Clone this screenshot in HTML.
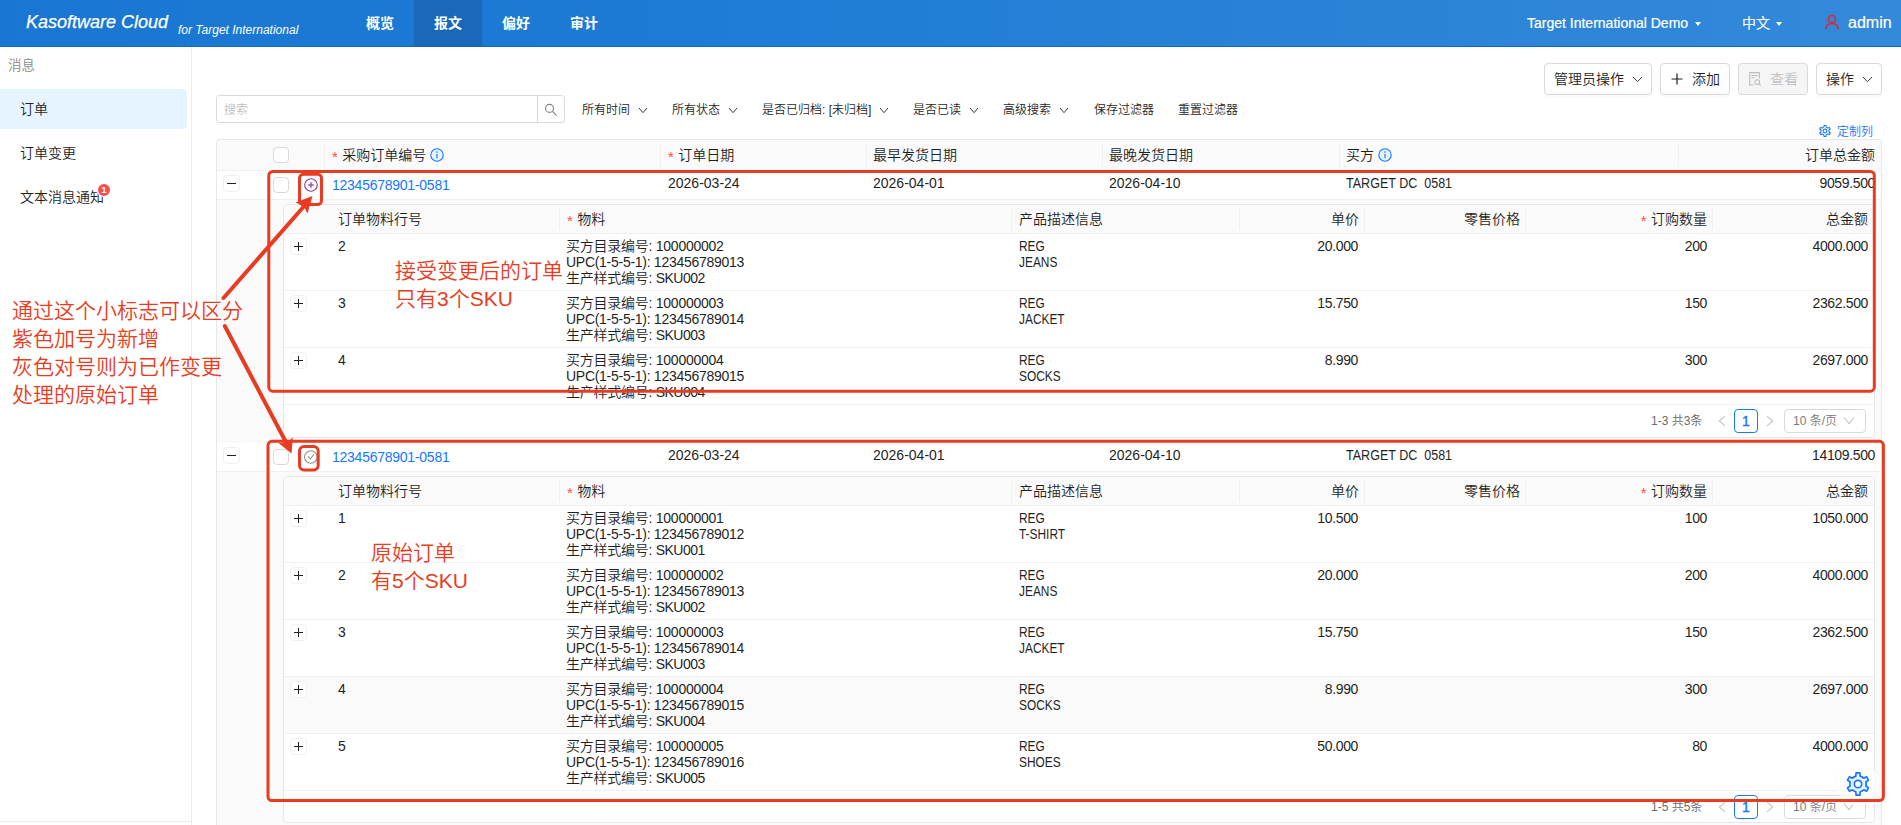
<!DOCTYPE html>
<html lang="zh-CN"><head><meta charset="utf-8"><title>订单 - Kasoftware Cloud</title>
<style>
*{box-sizing:border-box;margin:0;padding:0}
html,body{width:1901px;height:825px;overflow:hidden;background:#fff}
body{position:relative;font-family:"Liberation Sans","Noto Sans CJK SC",sans-serif;font-size:14px;color:#1f1f1f;line-height:16px;font-weight:350}
.abs{position:absolute;white-space:nowrap}
#hdr{position:absolute;left:0;top:0;width:1901px;height:47px;background:linear-gradient(90deg,#1976d2 0%,#1e7bd4 35%,#3489da 100%);border-bottom:1px solid #0f6bcb;color:#fff}
#hdr .brand{left:26px;top:10px;font-size:18px;line-height:24px;font-style:italic;-webkit-text-stroke:.25px #fff}
#hdr .sub{left:178px;top:22px;font-size:12px;line-height:16px;font-style:italic}
#hdr .tab{top:0;height:46px;width:68px;text-align:center;line-height:46px;font-weight:bold;font-size:14px}
#hdr .tab.on{background:#1a69b8;height:47px;border-bottom:1px solid #1360b0}
#hdr .r{top:0;line-height:46px;font-size:14px;-webkit-text-stroke:.2px #fff}
.caret{display:inline-block;width:0;height:0;border-left:3.5px solid transparent;border-right:3.5px solid transparent;border-top:4px solid #fff;vertical-align:middle;margin-left:7px;margin-top:-1px}
#side{position:absolute;left:0;top:47px;width:192px;height:778px;border-right:1px solid #ececec;background:#fff}
#side .grp{left:8px;top:11px;font-size:13.5px;line-height:16px;color:#8c8c8c}
#side .it{left:0;width:187px;height:40px;line-height:40px;padding-left:20px;font-size:14px;border-radius:0 4px 4px 0}
#side .it.on{background:#e6f4ff}
#side .foot{left:0;top:774px;width:191px;height:4px;border-top:1px solid #ececec}
.badge{position:absolute;left:98px;top:7px;width:12px;height:12px;border-radius:6px;background:#ff4d4f;color:#fff;font-size:9px;line-height:12px;text-align:center;font-weight:bold;box-shadow:0 0 0 1px #fff}
.btn{font:inherit;color:inherit;text-align:left;padding:0;position:absolute;top:63px;height:32px;border:1px solid #d9d9d9;border-radius:4px;background:#fff;box-shadow:0 2px 0 rgba(0,0,0,.02);font-size:14px;line-height:30px;white-space:nowrap}
.btn.dis{background:#f5f5f5;color:#bfbfbf;box-shadow:none}
.flt{position:absolute;top:102px;font-size:12px;line-height:16px;white-space:nowrap}
.chev{position:absolute}
#search{position:absolute;left:216px;top:95px;width:349px;height:28px;border:1px solid #d9d9d9;border-radius:3.500px;box-shadow:0 2px 0 rgba(0,0,0,.015);background:#fff}
#search .ph{left:7px;top:6px;font-size:12px;color:#bfbfbf}
#search .sb{position:absolute;right:0;top:0;width:27px;height:26px;border-left:1px solid #d9d9d9}
.cust{position:absolute;left:1837px;top:124px;font-size:12px;color:#1677ff;line-height:16px}
/* tables */
#tbl{position:absolute;left:216px;top:139px;width:1666px;height:686px;border:1px solid #e4e7ed;border-bottom:0;border-radius:4px 4px 0 0;background:#fafafa}
.th{position:absolute;background:#fafafa;border-bottom:1px solid #f0f0f0}
.row{position:absolute;background:#fff;border-bottom:1px solid #f0f0f0}
.sep{position:absolute;width:1px;background:#f0f0f0}
.t{position:absolute;white-space:nowrap;font-size:14px;line-height:16px}
.rt{text-align:right}
.n{letter-spacing:-.25px}
.n2{letter-spacing:-.36px}
.cap{display:inline-block;transform:scaleX(.85);transform-origin:0 50%}
.cap2{display:inline-block;transform:scaleX(.895);transform-origin:0 50%}
.star{color:#ff4d4f;font-family:"Liberation Sans",sans-serif;font-size:15px;line-height:14px;position:relative;top:1.500px;margin-right:.6px}
.cb{position:absolute;width:16px;height:16px;border:1px solid #d9d9d9;border-radius:4px;background:#fff}
.exp{position:absolute;width:17px;height:17px;border:1px solid #f0f0f0;border-radius:4px;background:#fff}
.exp:before{content:"";position:absolute;left:3px;right:3px;top:7px;height:1px;background:#1f1f1f}
.exp.plus:after{content:"";position:absolute;top:3px;bottom:3px;left:7px;width:1px;background:#1f1f1f}
a.lk{color:#1677ff;text-decoration:none}
.nest{position:absolute;left:66px;width:1592px;border:1px solid #e4e7ed;border-radius:4px;background:#fff;overflow:hidden}
.pg{position:absolute;font-size:12px;line-height:16px;white-space:nowrap}
.pgbox{position:absolute;width:24px;height:24px;border:1px solid #1677ff;border-radius:4px;color:#1677ff;-webkit-text-stroke:.4px #1677ff;text-align:center;line-height:22px;font-size:14px;background:#fff}
.pgsel{position:absolute;width:82px;height:24px;border:1px solid #d9d9d9;border-radius:4px;background:#fff;color:#7a7a7a;font-size:12px;line-height:22px;padding-left:8px}
#fab{position:absolute;left:1836px;top:762px;width:44px;height:44px;border-radius:22px;background:rgba(255,255,255,.66);box-shadow:0 0 2px rgba(0,0,0,.05)}
#anno{position:absolute;left:0;top:0;width:1901px;height:825px;pointer-events:none}
#anno text{font-family:"Liberation Sans","Noto Sans CJK SC",sans-serif;font-size:21px;font-weight:350;fill:#e83c22}
</style></head>
<body>
<header id="hdr">
<div class="abs brand">Kasoftware Cloud</div><div class="abs sub">for Target International</div>
<div class="abs tab" style="left:346px">概览</div><div class="abs tab on" style="left:414px">报文</div><div class="abs tab" style="left:482px">偏好</div><div class="abs tab" style="left:550px">审计</div>
<div class="abs r" style="left:1527px">Target International Demo<span class="caret"></span></div><div class="abs r" style="left:1742px">中文<span class="caret" style="margin-left:6px"></span></div><svg class="chev" style="left:1824px;top:14px" width="16" height="16" viewBox="0 0 16 16" fill="none" stroke="#e0262e" stroke-width="1.5"><circle cx="8" cy="5" r="3.6"/><path d="M1.6 15.2c.5-3.6 3-5.6 6.4-5.6s5.900 2 6.400 5.600"/></svg><div class="abs r" style="left:1848px;font-size:16px;line-height:46px">admin</div>
</header>
<aside id="side"><div class="abs grp">消息</div><div class="abs it on" style="top:42px">订单</div><div class="abs it" style="top:86px">订单变更</div><div class="abs it" style="top:130px">文本消息通知<span class="badge">1</span></div><div class="abs foot"></div></aside>
<button class="btn" style="left:1544px;width:108px;padding-left:9px">管理员操作</button><svg class="chev" style="left:1632px;top:76px" width="11" height="7" viewBox="0 0 11 7"><path d="M1 1 L5.5 5.7 L10 1" fill="none" stroke="#3a3a3a" stroke-width="1.0"/></svg><button class="btn" style="left:1660px;width:70px;padding-left:31px">添加</button><svg class="chev" style="left:1671px;top:73px" width="12" height="12" viewBox="0 0 12 12"><path d="M6 .5v11M.5 6h11" stroke="#1f1f1f" stroke-width="1.2"/></svg><button class="btn dis" disabled style="left:1738px;width:70px;padding-left:31px">查看</button><svg class="chev" style="left:1748px;top:71px" width="14" height="16" viewBox="0 0 14 16" fill="none" stroke="#bdbdbd" stroke-width="1.1"><path d="M5.600 14H1.700V1.600h9.700V7.400M3.400 4.500h6.300M3.400 6.700h3.100"/><circle cx="9.200" cy="11.100" r="2.400"/><path d="M11 12.900l1.800 1.700"/></svg><button class="btn" style="left:1816px;width:66px;padding-left:9px">操作</button><svg class="chev" style="left:1862px;top:76px" width="11" height="7" viewBox="0 0 11 7"><path d="M1 1 L5.5 5.7 L10 1" fill="none" stroke="#3a3a3a" stroke-width="1.0"/></svg>
<div id="search"><div class="abs ph">搜索</div><div class="sb"><svg class="chev" style="left:6px;top:6px" width="14" height="15" viewBox="0 0 14 15" fill="none" stroke="#7f7f7f" stroke-width="1.1"><circle cx="5.500" cy="6.400" r="4"/><path d="M8.400 9.300l4.300 4.300"/></svg></div></div>
<div class="flt" style="left:582px">所有时间</div><svg class="chev" style="left:638px;top:106.5px" width="10" height="7" viewBox="0 0 10 7"><path d="M1 1 L5.0 5.7 L9 1" fill="none" stroke="#3a3a3a" stroke-width="1"/></svg><div class="flt" style="left:672px">所有状态</div><svg class="chev" style="left:728px;top:106.5px" width="10" height="7" viewBox="0 0 10 7"><path d="M1 1 L5.0 5.7 L9 1" fill="none" stroke="#3a3a3a" stroke-width="1"/></svg><div class="flt" style="left:762px">是否已归档: [未归档]</div><svg class="chev" style="left:879px;top:106.5px" width="10" height="7" viewBox="0 0 10 7"><path d="M1 1 L5.0 5.7 L9 1" fill="none" stroke="#3a3a3a" stroke-width="1"/></svg><div class="flt" style="left:913px">是否已读</div><svg class="chev" style="left:969px;top:106.5px" width="10" height="7" viewBox="0 0 10 7"><path d="M1 1 L5.0 5.7 L9 1" fill="none" stroke="#3a3a3a" stroke-width="1"/></svg><div class="flt" style="left:1003px">高级搜索</div><svg class="chev" style="left:1059px;top:106.5px" width="10" height="7" viewBox="0 0 10 7"><path d="M1 1 L5.0 5.7 L9 1" fill="none" stroke="#3a3a3a" stroke-width="1"/></svg><div class="flt" style="left:1094px">保存过滤器</div><div class="flt" style="left:1178px">重置过滤器</div>
<svg class="chev" style="left:1819px;top:125px" width="12" height="12" viewBox="0 0 24 24" fill="none" stroke="#1677ff" stroke-width="2.2" stroke-linejoin="round"><path d="M9.8 4.1L10.1 0.9L13.9 0.9L14.2 4.1A8.2 8.2 0 0 1 17.7 6.1L20.7 4.8L22.5 8.1L19.9 10.0A8.2 8.2 0 0 1 19.9 14.0L22.5 15.9L20.7 19.2L17.7 17.9A8.2 8.2 0 0 1 14.2 19.9L13.9 23.1L10.1 23.1L9.8 19.9A8.2 8.2 0 0 1 6.3 17.9L3.3 19.2L1.5 15.9L4.1 14.0A8.2 8.2 0 0 1 4.1 10.0L1.5 8.1L3.3 4.8L6.3 6.1A8.2 8.2 0 0 1 9.8 4.1Z"/><circle cx="12" cy="12" r="3.700" fill="#fff"/></svg><div class="cust">定制列</div>
<div id="tbl">
<div class="th" style="left:0;top:0;width:1664px;height:31px;border-radius:4px 4px 0 0"></div><div class="sep" style="left:107px;top:4px;height:22px"></div><div class="sep" style="left:443px;top:4px;height:22px"></div><div class="sep" style="left:649px;top:4px;height:22px"></div><div class="sep" style="left:885px;top:4px;height:22px"></div><div class="sep" style="left:1122px;top:4px;height:22px"></div><div class="sep" style="left:1461px;top:4px;height:22px"></div><div class="cb" style="left:56px;top:7px"></div><div class="t" style="left:115px;top:7px"><span class="star">*</span> 采购订单编号</div><svg class="chev" style="left:213px;top:8px" width="14" height="14" viewBox="0 0 14 14"><circle cx="7" cy="7" r="6.2" fill="#e6f4ff" stroke="#1677ff" stroke-width="1.1"/><rect x="6.4" y="6" width="1.2" height="4.2" fill="#1677ff"/><circle cx="7" cy="4.1" r=".8" fill="#1677ff"/></svg><div class="t" style="left:451px;top:7px"><span class="star">*</span> 订单日期</div><div class="t" style="left:656px;top:7px">最早发货日期</div><div class="t" style="left:892px;top:7px">最晚发货日期</div><div class="t" style="left:1129px;top:7px">买方</div><svg class="chev" style="left:1161px;top:8px" width="14" height="14" viewBox="0 0 14 14"><circle cx="7" cy="7" r="6.2" fill="#e6f4ff" stroke="#1677ff" stroke-width="1.1"/><rect x="6.4" y="6" width="1.2" height="4.2" fill="#1677ff"/><circle cx="7" cy="4.1" r=".8" fill="#1677ff"/></svg><div class="t rt" style="left:1483px;width:175px;top:7px">订单总金额</div>
<div class="row" style="left:0;top:31px;width:1664px;height:29px"></div><div class="exp" style="left:6px;top:35px"></div><div class="cb" style="left:56px;top:37px"></div><svg class="chev" style="left:87px;top:38px" width="14" height="14" viewBox="0 0 14 14" fill="none" stroke="#8e3a84" stroke-width="1.1"><circle cx="7" cy="7" r="6.300"/><path d="M7 4.200v5.600M4.200 7h5.600" stroke-width="1.500" stroke="#a0559a"/></svg><div class="t" style="left:115px;top:37px"><a class="lk n">12345678901-0581</a></div><div class="t" style="left:451px;top:35px">2026-03-24</div><div class="t" style="left:656px;top:35px">2026-04-01</div><div class="t" style="left:892px;top:35px">2026-04-10</div><div class="t" style="left:1129px;top:35px"><span class="cap2">TARGET DC&nbsp; 0581</span></div><div class="t rt n2" style="left:1483px;width:175px;top:35px">9059.500</div>
<div class="nest" style="top:64px;height:234px">
<div class="th" style="left:0;top:0;width:1590px;height:29px"></div><div class="sep" style="left:275px;top:3px;height:22px"></div><div class="sep" style="left:727px;top:3px;height:22px"></div><div class="sep" style="left:955px;top:3px;height:22px"></div><div class="sep" style="left:1080px;top:3px;height:22px"></div><div class="sep" style="left:1241px;top:3px;height:22px"></div><div class="sep" style="left:1428px;top:3px;height:22px"></div><div class="t" style="left:54px;top:6px">订单物料行号</div><div class="t" style="left:283px;top:6px"><span class="star">*</span> 物料</div><div class="t" style="left:735px;top:6px">产品描述信息</div><div class="t rt" style="left:975px;width:100px;top:6px">单价</div><div class="t rt" style="left:1136px;width:100px;top:6px">零售价格</div><div class="t rt" style="left:1273px;width:150px;top:6px"><span class="star">*</span> 订购数量</div><div class="t rt" style="left:1484px;width:100px;top:6px">总金额</div>
<div class="row" style="left:0;top:29px;width:1590px;height:57px"></div><div class="exp plus" style="left:6px;top:33px"></div><div class="t" style="left:54px;top:33px">2</div><div class="t" style="left:282px;top:33px"><span class="n">买方目录编号: 100000002</span><br><span class="n" style="letter-spacing:-.28px">UPC(1-5-5-1): 123456789013</span><br><span class="n">生产样式编号: <span style="letter-spacing:-.55px">SKU002</span></span></div><div class="t" style="left:735px;top:33px"><span class="cap">REG</span><br><span class="cap">JEANS</span></div><div class="t rt n2" style="left:974px;width:100px;top:33px">20.000</div><div class="t rt n2" style="left:1273px;width:150px;top:33px">200</div><div class="t rt n2" style="left:1484px;width:100px;top:33px">4000.000</div>
<div class="row" style="left:0;top:86px;width:1590px;height:57px"></div><div class="exp plus" style="left:6px;top:90px"></div><div class="t" style="left:54px;top:90px">3</div><div class="t" style="left:282px;top:90px"><span class="n">买方目录编号: 100000003</span><br><span class="n" style="letter-spacing:-.28px">UPC(1-5-5-1): 123456789014</span><br><span class="n">生产样式编号: <span style="letter-spacing:-.55px">SKU003</span></span></div><div class="t" style="left:735px;top:90px"><span class="cap">REG</span><br><span class="cap">JACKET</span></div><div class="t rt n2" style="left:974px;width:100px;top:90px">15.750</div><div class="t rt n2" style="left:1273px;width:150px;top:90px">150</div><div class="t rt n2" style="left:1484px;width:100px;top:90px">2362.500</div>
<div class="row" style="left:0;top:143px;width:1590px;height:57px"></div><div class="exp plus" style="left:6px;top:147px"></div><div class="t" style="left:54px;top:147px">4</div><div class="t" style="left:282px;top:147px"><span class="n">买方目录编号: 100000004</span><br><span class="n" style="letter-spacing:-.28px">UPC(1-5-5-1): 123456789015</span><br><span class="n">生产样式编号: <span style="letter-spacing:-.55px">SKU004</span></span></div><div class="t" style="left:735px;top:147px"><span class="cap">REG</span><br><span class="cap">SOCKS</span></div><div class="t rt n2" style="left:974px;width:100px;top:147px">8.990</div><div class="t rt n2" style="left:1273px;width:150px;top:147px">300</div><div class="t rt n2" style="left:1484px;width:100px;top:147px">2697.000</div>
<div class="pg" style="left:1367px;top:208px;color:#6b6b6b">1-3 共3条</div><svg class="chev" style="left:1434px;top:210px" width="8" height="12" viewBox="0 0 8 12"><path d="M7 1.200 L1.300 6 L7 10.800" fill="none" stroke="#c4c4c4" stroke-width="1.1"/></svg><div class="pgbox" style="left:1450px;top:204px">1</div><svg class="chev" style="left:1482px;top:210px" width="8" height="12" viewBox="0 0 8 12"><path d="M1 1.200 L6.700 6 L1 10.800" fill="none" stroke="#c4c4c4" stroke-width="1.1"/></svg><div class="pgsel" style="left:1500px;top:204px">10 条/页</div><svg class="chev" style="left:1559px;top:211px" width="12" height="9" viewBox="0 0 12 9"><path d="M1 1.500 L6 7.600 L11 1.500" fill="none" stroke="#c4c4c4" stroke-width="1.1"/></svg>
</div>
<div class="row" style="left:0;top:303px;width:1664px;height:29px"></div><div class="exp" style="left:6px;top:307px"></div><div class="cb" style="left:56px;top:309px"></div><svg class="chev" style="left:87px;top:310px" width="14" height="14" viewBox="0 0 14 14" fill="none" stroke="#8f8f8f" stroke-width="1.050"><circle cx="6.800" cy="7" r="6.300"/><path d="M4.200 6.300l2.300 2.700 3.300-4.800"/></svg><div class="t" style="left:115px;top:309px"><a class="lk n">12345678901-0581</a></div><div class="t" style="left:451px;top:307px">2026-03-24</div><div class="t" style="left:656px;top:307px">2026-04-01</div><div class="t" style="left:892px;top:307px">2026-04-10</div><div class="t" style="left:1129px;top:307px"><span class="cap2">TARGET DC&nbsp; 0581</span></div><div class="t rt n2" style="left:1483px;width:175px;top:307px">14109.500</div>
<div class="nest" style="top:336px;height:347px">
<div class="th" style="left:0;top:0;width:1590px;height:29px"></div><div class="sep" style="left:275px;top:3px;height:22px"></div><div class="sep" style="left:727px;top:3px;height:22px"></div><div class="sep" style="left:955px;top:3px;height:22px"></div><div class="sep" style="left:1080px;top:3px;height:22px"></div><div class="sep" style="left:1241px;top:3px;height:22px"></div><div class="sep" style="left:1428px;top:3px;height:22px"></div><div class="t" style="left:54px;top:6px">订单物料行号</div><div class="t" style="left:283px;top:6px"><span class="star">*</span> 物料</div><div class="t" style="left:735px;top:6px">产品描述信息</div><div class="t rt" style="left:975px;width:100px;top:6px">单价</div><div class="t rt" style="left:1136px;width:100px;top:6px">零售价格</div><div class="t rt" style="left:1273px;width:150px;top:6px"><span class="star">*</span> 订购数量</div><div class="t rt" style="left:1484px;width:100px;top:6px">总金额</div>
<div class="row" style="left:0;top:29px;width:1590px;height:57px"></div><div class="exp plus" style="left:6px;top:33px"></div><div class="t" style="left:54px;top:33px">1</div><div class="t" style="left:282px;top:33px"><span class="n">买方目录编号: 100000001</span><br><span class="n" style="letter-spacing:-.28px">UPC(1-5-5-1): 123456789012</span><br><span class="n">生产样式编号: <span style="letter-spacing:-.55px">SKU001</span></span></div><div class="t" style="left:735px;top:33px"><span class="cap">REG</span><br><span class="cap">T-SHIRT</span></div><div class="t rt n2" style="left:974px;width:100px;top:33px">10.500</div><div class="t rt n2" style="left:1273px;width:150px;top:33px">100</div><div class="t rt n2" style="left:1484px;width:100px;top:33px">1050.000</div>
<div class="row" style="left:0;top:86px;width:1590px;height:57px"></div><div class="exp plus" style="left:6px;top:90px"></div><div class="t" style="left:54px;top:90px">2</div><div class="t" style="left:282px;top:90px"><span class="n">买方目录编号: 100000002</span><br><span class="n" style="letter-spacing:-.28px">UPC(1-5-5-1): 123456789013</span><br><span class="n">生产样式编号: <span style="letter-spacing:-.55px">SKU002</span></span></div><div class="t" style="left:735px;top:90px"><span class="cap">REG</span><br><span class="cap">JEANS</span></div><div class="t rt n2" style="left:974px;width:100px;top:90px">20.000</div><div class="t rt n2" style="left:1273px;width:150px;top:90px">200</div><div class="t rt n2" style="left:1484px;width:100px;top:90px">4000.000</div>
<div class="row" style="left:0;top:143px;width:1590px;height:57px"></div><div class="exp plus" style="left:6px;top:147px"></div><div class="t" style="left:54px;top:147px">3</div><div class="t" style="left:282px;top:147px"><span class="n">买方目录编号: 100000003</span><br><span class="n" style="letter-spacing:-.28px">UPC(1-5-5-1): 123456789014</span><br><span class="n">生产样式编号: <span style="letter-spacing:-.55px">SKU003</span></span></div><div class="t" style="left:735px;top:147px"><span class="cap">REG</span><br><span class="cap">JACKET</span></div><div class="t rt n2" style="left:974px;width:100px;top:147px">15.750</div><div class="t rt n2" style="left:1273px;width:150px;top:147px">150</div><div class="t rt n2" style="left:1484px;width:100px;top:147px">2362.500</div>
<div class="row" style="left:0;top:200px;width:1590px;height:57px;background:#fafafa"></div><div class="exp plus" style="left:6px;top:204px"></div><div class="t" style="left:54px;top:204px">4</div><div class="t" style="left:282px;top:204px"><span class="n">买方目录编号: 100000004</span><br><span class="n" style="letter-spacing:-.28px">UPC(1-5-5-1): 123456789015</span><br><span class="n">生产样式编号: <span style="letter-spacing:-.55px">SKU004</span></span></div><div class="t" style="left:735px;top:204px"><span class="cap">REG</span><br><span class="cap">SOCKS</span></div><div class="t rt n2" style="left:974px;width:100px;top:204px">8.990</div><div class="t rt n2" style="left:1273px;width:150px;top:204px">300</div><div class="t rt n2" style="left:1484px;width:100px;top:204px">2697.000</div>
<div class="row" style="left:0;top:257px;width:1590px;height:57px"></div><div class="exp plus" style="left:6px;top:261px"></div><div class="t" style="left:54px;top:261px">5</div><div class="t" style="left:282px;top:261px"><span class="n">买方目录编号: 100000005</span><br><span class="n" style="letter-spacing:-.28px">UPC(1-5-5-1): 123456789016</span><br><span class="n">生产样式编号: <span style="letter-spacing:-.55px">SKU005</span></span></div><div class="t" style="left:735px;top:261px"><span class="cap">REG</span><br><span class="cap">SHOES</span></div><div class="t rt n2" style="left:974px;width:100px;top:261px">50.000</div><div class="t rt n2" style="left:1273px;width:150px;top:261px">80</div><div class="t rt n2" style="left:1484px;width:100px;top:261px">4000.000</div>
<div class="pg" style="left:1367px;top:322px;color:#6b6b6b">1-5 共5条</div><svg class="chev" style="left:1434px;top:324px" width="8" height="12" viewBox="0 0 8 12"><path d="M7 1.200 L1.300 6 L7 10.800" fill="none" stroke="#c4c4c4" stroke-width="1.1"/></svg><div class="pgbox" style="left:1450px;top:318px">1</div><svg class="chev" style="left:1482px;top:324px" width="8" height="12" viewBox="0 0 8 12"><path d="M1 1.200 L6.700 6 L1 10.800" fill="none" stroke="#c4c4c4" stroke-width="1.1"/></svg><div class="pgsel" style="left:1500px;top:318px">10 条/页</div><svg class="chev" style="left:1559px;top:325px" width="12" height="9" viewBox="0 0 12 9"><path d="M1 1.500 L6 7.600 L11 1.500" fill="none" stroke="#c4c4c4" stroke-width="1.1"/></svg>
</div>
</div>
<div id="fab"><svg class="chev" style="left:9.8px;top:9.8px" width="24" height="24" viewBox="0 0 24 24" fill="#e6f4ff" stroke="#1677ff" stroke-width="1.7" stroke-linejoin="round"><path d="M9.8 4.1L10.1 0.9L13.9 0.9L14.2 4.1A8.2 8.2 0 0 1 17.7 6.1L20.7 4.8L22.5 8.1L19.9 10.0A8.2 8.2 0 0 1 19.9 14.0L22.5 15.9L20.7 19.2L17.7 17.9A8.2 8.2 0 0 1 14.2 19.9L13.9 23.1L10.1 23.1L9.8 19.9A8.2 8.2 0 0 1 6.3 17.9L3.3 19.2L1.5 15.9L4.1 14.0A8.2 8.2 0 0 1 4.1 10.0L1.5 8.1L3.3 4.8L6.3 6.1A8.2 8.2 0 0 1 9.8 4.1Z"/><circle cx="12" cy="12" r="3.700" fill="#fff"/></svg></div>
<svg id="anno" viewBox="0 0 1901 825">
<g fill="none" stroke="#e83c22" stroke-width="3" stroke-linejoin="round">
<rect x="268.800" y="171.400" width="1605.500" height="219.800" rx="4"/>
<rect x="299.500" y="174.200" width="22" height="30.300" rx="4"/>
<rect x="268" y="441.300" width="1615.400" height="359.200" rx="4"/>
<rect x="299.500" y="446.400" width="18.700" height="23.600" rx="4.500"/>
<path d="M223.500 298 L306 204" stroke-width="4" stroke-linecap="round"/>
<path d="M224.800 326 L288 446" stroke-width="4" stroke-linecap="round"/>
</g>
<path d="M312.500 196 L295.500 202.500 L303.500 206 L307.500 213.500 Z" fill="#e83c22"/>
<path d="M291.500 453.500 L278.500 443 L286.500 443 L292.800 437.500 Z" fill="#e83c22"/>
<text x="12" y="317.5">通过这个小标志可以区分</text>
<text x="12" y="345.5">紫色加号为新增</text>
<text x="12" y="373.5">灰色对号则为已作变更</text>
<text x="12" y="401.5">处理的原始订单</text>
<text x="395" y="277.5">接受变更后的订单</text>
<text x="395" y="305.5">只有3个SKU</text>
<text x="371" y="559.5">原始订单</text>
<text x="371" y="587.5">有5个SKU</text>
</svg>
</body></html>
